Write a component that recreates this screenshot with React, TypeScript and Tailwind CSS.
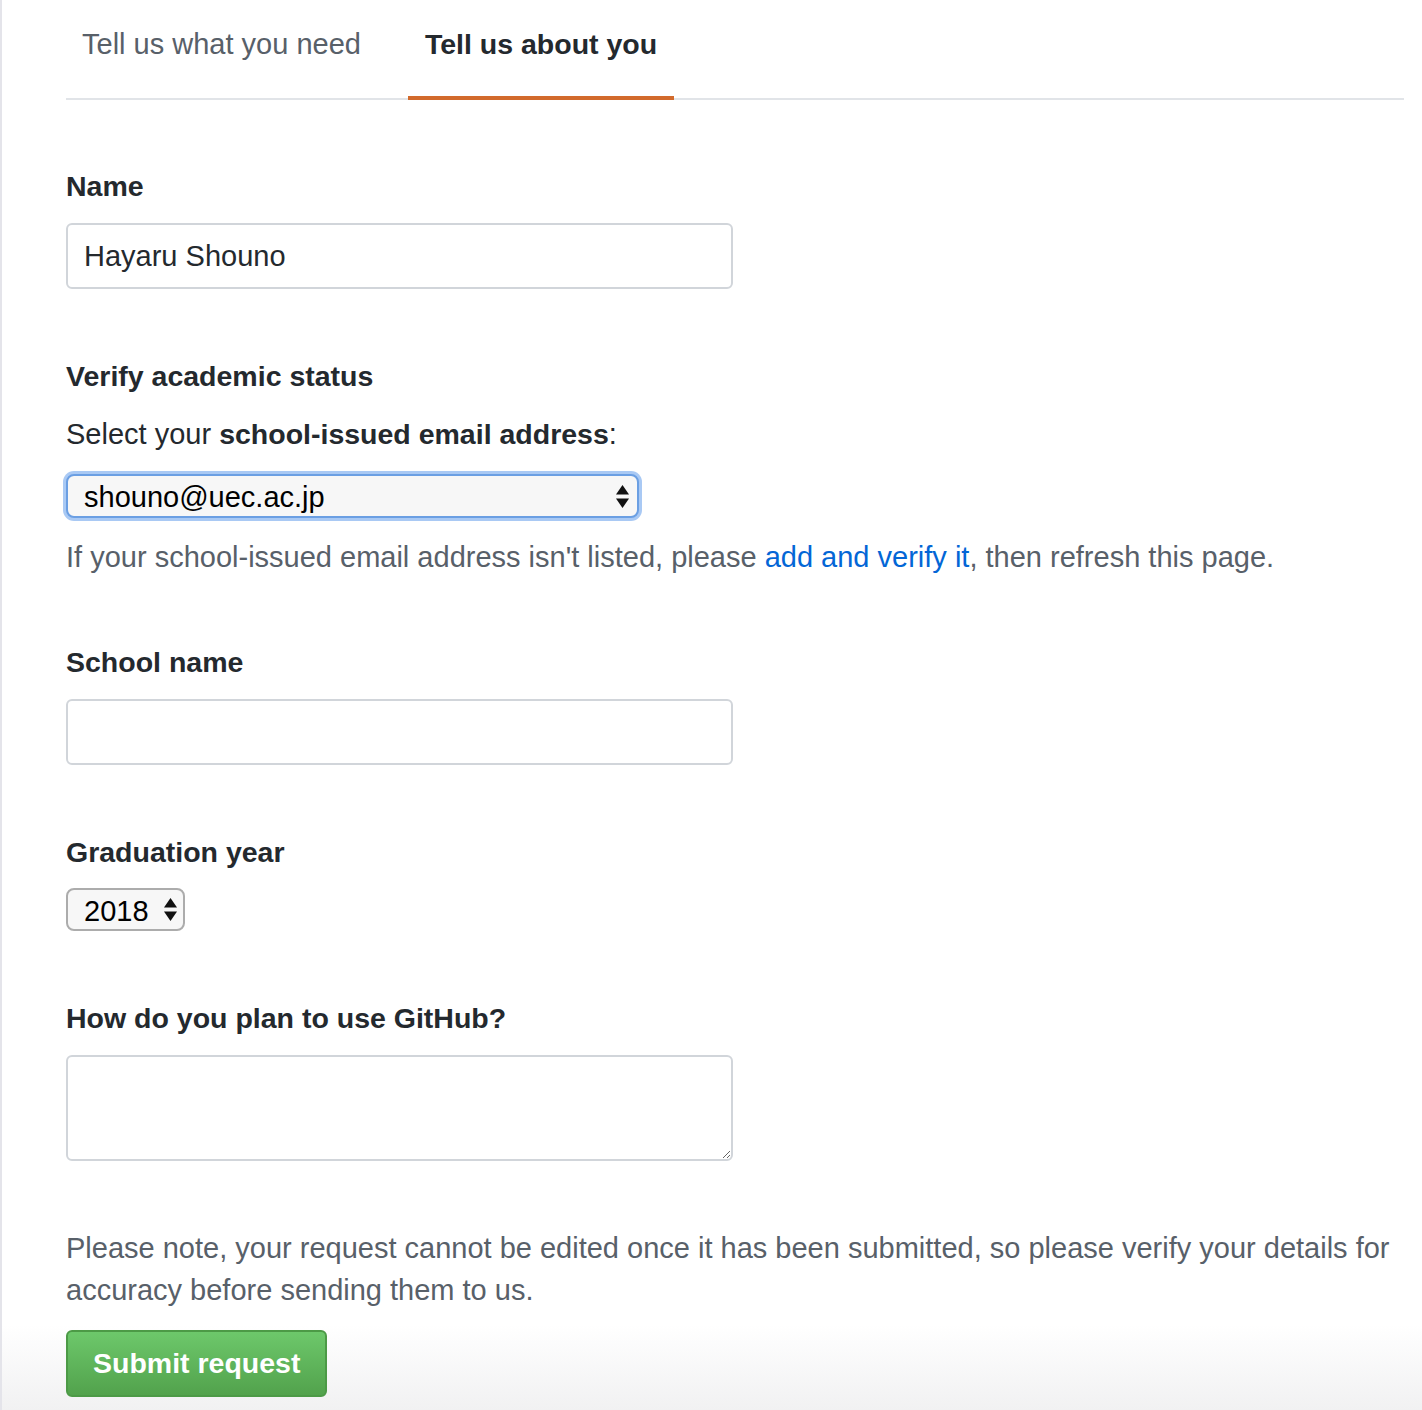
import React, { useState } from 'react';

// Up/down chevrons drawn inside the native-looking select boxes
const SelectArrows: React.FC<{ className?: string }> = ({ className }) => (
  <svg viewBox="0 0 13 23" className={className} aria-hidden="true">
    <polygon points="6.5,0 13,9.5 0,9.5" fill="#111" />
    <polygon points="0,13.5 13,13.5 6.5,23" fill="#111" />
  </svg>
);

const FieldLabel: React.FC<{ children: React.ReactNode }> = ({ children }) => (
  <label className="block text-[28.5px] leading-[34px] font-bold text-[#24292e]">{children}</label>
);

export default function App() {
  const [activeTab, setActiveTab] = useState<'need' | 'about'>('about');
  const [name, setName] = useState('Hayaru Shouno');
  const [email, setEmail] = useState('shouno@uec.ac.jp');
  const [school, setSchool] = useState('');
  const [year, setYear] = useState('2018');
  const [plan, setPlan] = useState('');

  return (
    <div
      className="min-h-[1410px] border-l-2 border-[#e4e4ea] bg-[linear-gradient(to_bottom,#ffffff_0px,#ffffff_1325px,#f1f1f2_1410px)] pl-[64px] pr-[18px]"
      style={{ fontFamily: '"Liberation Sans", Arial, sans-serif' }}
    >
      {/* Tabs */}
      <div className="flex gap-[31px] border-b-2 border-[#e1e4e8]">
        <button
          onClick={() => setActiveTab('need')}
          className={`-mb-[2px] border-b-4 px-4 pt-[27px] pb-[35px] leading-[34px] ${
            activeTab === 'need'
              ? 'border-[#d26a2c] text-[28.5px] font-bold text-[#24292e]'
              : 'border-transparent text-[29px] text-[#586069]'
          }`}
        >
          Tell us what you need
        </button>
        <button
          onClick={() => setActiveTab('about')}
          className={`-mb-[2px] border-b-4 px-[17px] pt-[27px] pb-[35px] leading-[34px] ${
            activeTab === 'about'
              ? 'border-[#d26a2c] text-[28.5px] font-bold text-[#24292e]'
              : 'border-transparent text-[29px] text-[#586069]'
          }`}
        >
          Tell us about you
        </button>
      </div>

      <form className="flex flex-col pt-[69px]" onSubmit={e => e.preventDefault()}>
        {/* Name */}
        <div className="flex flex-col gap-5">
          <FieldLabel>Name</FieldLabel>
          <input
            value={name}
            onChange={e => setName(e.target.value)}
            className="h-[66px] w-[667px] rounded-md border-2 border-[#d1d5da] bg-white px-4 text-[29px] text-[#24292e] outline-none"
          />
        </div>

        {/* Academic status */}
        <div className="mt-[70px] flex flex-col">
          <FieldLabel>Verify academic status</FieldLabel>
          <p className="mt-6 text-[29px] leading-[34px] text-[#24292e]">
            Select your <strong className="text-[28.5px] font-bold">school-issued email address</strong>:
          </p>
          <div className="relative mt-[23px] w-[573px]">
            <select
              value={email}
              onChange={e => setEmail(e.target.value)}
              className="h-[44px] w-full appearance-none rounded-lg border-2 border-[#6b9fe3] bg-[#f7f7f7] pl-4 text-[29px] text-black shadow-[0_0_0_3px_#a9c9f4] outline-none"
            >
              <option>shouno@uec.ac.jp</option>
            </select>
            <SelectArrows className="pointer-events-none absolute right-[10px] top-[11px] h-[23px] w-[13px]" />
          </div>
          <p className="mt-[22px] text-[29px] leading-[34px] text-[#586069]">
            If your school-issued email address isn't listed, please{' '}
            <a href="#" className="text-[#0366d6]">add and verify it</a>, then refresh this page.
          </p>
        </div>

        {/* School name */}
        <div className="mt-[71px] flex flex-col gap-5">
          <FieldLabel>School name</FieldLabel>
          <input
            value={school}
            onChange={e => setSchool(e.target.value)}
            className="h-[66px] w-[667px] rounded-md border-2 border-[#d1d5da] bg-white px-4 text-[29px] text-[#24292e] outline-none"
          />
        </div>

        {/* Graduation year */}
        <div className="mt-[70px] flex flex-col gap-[19px]">
          <FieldLabel>Graduation year</FieldLabel>
          <div className="relative w-[119px]">
            <select
              value={year}
              onChange={e => setYear(e.target.value)}
              className="h-[43px] w-full appearance-none rounded-lg border-2 border-[#acacac] bg-[#f7f7f7] pl-4 text-[29px] text-black outline-none"
            >
              <option>2018</option>
              <option>2019</option>
              <option>2020</option>
              <option>2021</option>
            </select>
            <SelectArrows className="pointer-events-none absolute right-[8px] top-[10px] h-[23px] w-[13px]" />
          </div>
        </div>

        {/* Planned use */}
        <div className="mt-[70px] flex flex-col gap-5">
          <FieldLabel>How do you plan to use GitHub?</FieldLabel>
          <textarea
            value={plan}
            onChange={e => setPlan(e.target.value)}
            className="h-[106px] w-[667px] rounded-md border-2 border-[#d1d5da] bg-white px-4 py-2 text-[29px] text-[#24292e] outline-none"
          />
        </div>

        <p className="mt-[66px] text-[29px] leading-[42px] text-[#586069]">
          Please note, your request cannot be edited once it has been submitted, so please verify your details for
          accuracy before sending them to us.
        </p>

        <div className="mt-[19px]">
          <button
            type="submit"
            className="h-[67px] rounded-md border-2 border-[#4c9a46] bg-[linear-gradient(to_bottom,#6dc86b,#52a24c)] px-[25px] text-[28.5px] font-bold text-white"
          >
            Submit request
          </button>
        </div>
      </form>
    </div>
  );
}
